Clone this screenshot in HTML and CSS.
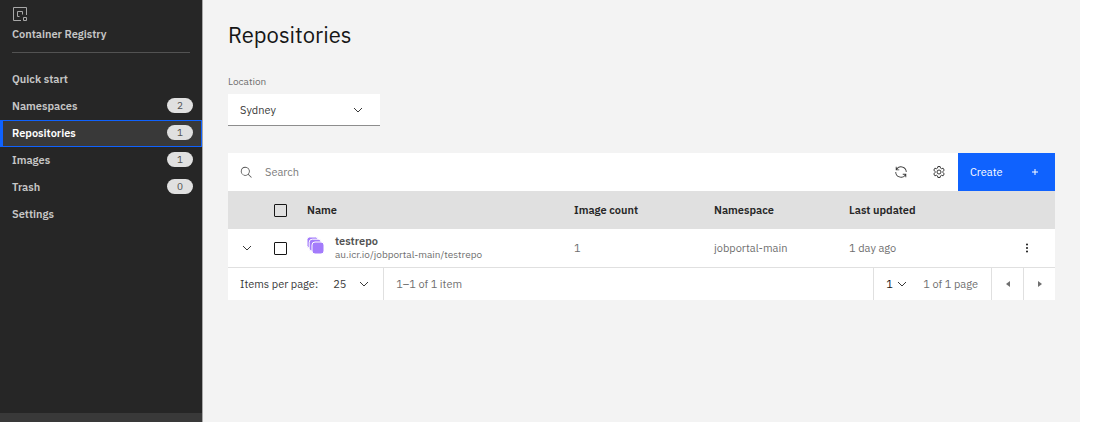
FILE: index.html
```html
<!DOCTYPE html>
<html lang="en">
<head>
<meta charset="utf-8">
<title>Container Registry - Repositories</title>
<link rel="stylesheet" href="styles.css">
</head>
<body>
<div class="shell">
  <aside class="sidebar">
    <header class="product">
      <svg class="product-icon" viewBox="0 0 16 16" aria-hidden="true"><path d="M9 14.500H1.500V1.500H14.500V9M7.500 10.500H5.500V5.500H10.500V8.500M11.500 11.500h3v3h-3z"/></svg>
      <span class="product-name">Container Registry</span>
    </header>
    <nav class="nav" aria-label="Container Registry">
      <a class="nav-link" href="#quick-start">Quick start</a>
      <a class="nav-link" href="#namespaces">Namespaces <span class="count">2</span></a>
      <a class="nav-link active" href="#repositories" aria-current="page">Repositories <span class="count">1</span></a>
      <a class="nav-link" href="#images">Images <span class="count">1</span></a>
      <a class="nav-link" href="#trash">Trash <span class="count">0</span></a>
      <a class="nav-link" href="#settings">Settings</a>
    </nav>
    <div class="sidebar-foot"></div>
  </aside>
  <main class="content">
    <h1 class="title">Repositories</h1>
    <label class="field-label" for="location">Location</label>
    <div class="select location">
      <select id="location"><option>Sydney</option></select>
      <svg class="chevron" viewBox="0 0 12 12" aria-hidden="true"><path d="M2 4l4 4 4-4"/></svg>
    </div>
    <section class="panel" aria-label="Repositories">
      <div class="toolbar">
        <label class="search-icon" for="search"><svg class="solid" viewBox="0 0 32 32" role="img" aria-label="Search"><path d="M29 27.586l-7.552-7.552a11.018 11.018 0 1 0-1.414 1.414L27.586 29zM4 13a9 9 0 1 1 9 9 9.010 9.010 0 0 1-9-9z"/></svg></label>
        <input class="search" id="search" type="search" placeholder="Search">
        <button class="tool" type="button" aria-label="Refresh"><svg class="solid" viewBox="0 0 32 32"><path d="M12 10H6.780A11 11 0 0 1 27 16h2A13 13 0 0 0 6 7.680V4H4v8h8zM20 22h5.220A11 11 0 0 1 5 16H3a13 13 0 0 0 23 8.320V28h2v-8h-8z"/></svg></button>
        <button class="tool" type="button" aria-label="Settings"><svg viewBox="0 0 14 14"><path d="M5.900 1.500h2.200l.4 1.600 1 .6 1.600-.5 1.100 1.900-1.200 1.200v1.400l1.200 1.200-1.100 1.900-1.600-.5-1 .6-.4 1.600H5.900l-.4-1.600-1-.6-1.600.5-1.100-1.900L3 7.700V6.300L1.800 5.100l1.100-1.900 1.600.5 1-.6z"/><circle cx="7" cy="7" r="2"/></svg></button>
        <button class="create" type="button">Create <svg viewBox="0 0 8 8" aria-hidden="true"><path d="M4 1v6M1 4h6"/></svg></button>
      </div>
      <table class="table">
        <colgroup><col class="c-expand"><col class="c-check"><col><col class="c-count"><col class="c-space"><col class="c-date"><col class="c-menu"></colgroup>
        <thead>
          <tr>
            <th></th>
            <th class="check-cell"><input class="check" type="checkbox" aria-label="Select all rows"></th>
            <th scope="col">Name</th>
            <th scope="col">Image count</th>
            <th scope="col">Namespace</th>
            <th scope="col">Last updated</th>
            <th></th>
          </tr>
        </thead>
        <tbody>
          <tr>
            <td><button class="expand" type="button" aria-label="Expand row"><svg class="chevron" viewBox="0 0 12 12"><path d="M2 4l4 4 4-4"/></svg></button></td>
            <td class="check-cell"><input class="check" type="checkbox" aria-label="Select testrepo"></td>
            <td>
              <div class="repo">
                <svg class="repo-icon" viewBox="0 0 17 17" aria-hidden="true"><rect width="11" height="11" rx="2.500"/><rect x="2.200" y="2.200" width="12" height="12" rx="3"/><rect x="5" y="5" width="12" height="12" rx="3"/></svg>
                <div class="repo-text">
                  <span class="repo-name">testrepo</span>
                  <span class="repo-path">au.icr.io/jobportal-main/testrepo</span>
                </div>
              </div>
            </td>
            <td>1</td>
            <td>jobportal-main</td>
            <td>1 day ago</td>
            <td><button class="menu" type="button" aria-label="Row actions"><svg class="solid" viewBox="0 0 12 12"><circle cx="6" cy="2.500" r="1"/><circle cx="6" cy="6" r="1"/><circle cx="6" cy="9.500" r="1"/></svg></button></td>
          </tr>
        </tbody>
      </table>
      <div class="pager">
        <div class="pager-size">
          <label for="size">Items per page:</label>
          <div class="select size">
            <select id="size"><option>25</option></select>
            <svg class="chevron" viewBox="0 0 12 12" aria-hidden="true"><path d="M2 4l4 4 4-4"/></svg>
          </div>
        </div>
        <span class="pager-range">1–1 of 1 item</span>
        <div class="pager-page">
          <div class="select page">
            <select id="page" aria-label="Page number"><option>1</option></select>
            <svg class="chevron" viewBox="0 0 12 12" aria-hidden="true"><path d="M2 4l4 4 4-4"/></svg>
          </div>
          <label for="page">1 of 1 page</label>
        </div>
        <button class="step" type="button" aria-label="Previous page"><svg class="solid" viewBox="0 0 8 8"><path d="M6 1v6L2 4z"/></svg></button>
        <button class="step" type="button" aria-label="Next page"><svg class="solid" viewBox="0 0 8 8"><path d="M2 1v6l4-3z"/></svg></button>
      </div>
    </section>
  </main>
</div>
</body>
</html>
```
FILE: styles.css
```css
* { box-sizing: border-box; }
body {
  margin: 0;
  background: #fff;
  color: #161616;
  font: 11px/16px "IBM Plex Sans", Inter, sans-serif;
}
button, input, select { font: inherit; color: inherit; }
button { border: 0; padding: 0; background: none; display: flex; align-items: center; justify-content: center; }
svg { display: block; fill: none; stroke: currentColor; }
.solid { fill: currentColor; stroke: none; }

.shell { display: flex; min-height: 100vh; margin-right: 15px; }
.sidebar {
  flex: 0 0 203px;
  display: flex;
  flex-direction: column;
  background: #262626;
  border-right: 1px solid #a8a8a8;
  color: #c6c6c6;
  font-weight: 600;
}
.product { margin: 0 12px; padding: 6px 0 10px; border-bottom: 1px solid #525252; }
.product-icon { width: 16px; height: 16px; margin-bottom: 4px; color: #a8a8a8; }
.product-name { display: block; }
.nav { display: flex; flex-direction: column; padding-top: 13px; }
.nav-link {
  display: flex;
  align-items: center;
  justify-content: space-between;
  height: 27px;
  padding: 0 9px 2px 12px;
  color: inherit;
  text-decoration: none;
}
.nav-link.active {
  background: #393939;
  color: #fff;
  border: 1px solid #0f62fe;
  border-left-width: 3px;
  padding: 0 8px 2px 9px;
}
.count {
  width: 26px;
  border-radius: 8px;
  background: #e0e0e0;
  color: #525252;
  font-size: 10px;
  line-height: 15px;
  font-weight: 400;
  text-align: center;
}
.sidebar-foot { height: 9px; margin-top: auto; background: #393939; }

.content { flex: 1; min-width: 0; padding: 20px 25px; background: #f3f3f3; }
.title { margin: 0 0 24px; font-size: 22px; line-height: 30px; font-weight: 400; }
.field-label { display: block; margin-bottom: 4px; color: #6f6f6f; font-size: 10px; }

.select { display: grid; align-items: center; }
.select select, .select .chevron { grid-area: 1 / 1; }
.select select { appearance: none; width: 100%; height: 100%; padding: 0; border: 0; border-radius: 0; background: transparent; }
.select .chevron { justify-self: end; pointer-events: none; }
.chevron { width: 12px; height: 12px; color: #393939; }
.location { width: 152px; height: 32px; margin-bottom: 27px; background: #fff; border-bottom: 1px solid #8d8d8d; color: #393939; }
.location select { padding-left: 12px; }
.location .chevron { margin-right: 16px; }

.panel { background: #fff; }
.toolbar { display: flex; height: 38px; }
.search-icon { display: flex; align-items: center; padding: 0 12px; color: #525252; }
.search-icon svg { width: 13px; height: 13px; }
.search { flex: 1; min-width: 0; padding: 0; border: 0; background: none; }
.search::placeholder { color: #7c7c7c; opacity: 1; }
.tool { width: 38px; color: #393939; }
.tool svg { width: 14px; height: 14px; }
.create { width: 97px; padding: 0 16px 0 12px; justify-content: space-between; background: #0f62fe; color: #fff; }
.create svg { width: 8px; height: 8px; }

.table { width: 100%; table-layout: fixed; border-spacing: 0; color: #6f6f6f; }
.c-expand { width: 38px; }
.c-check { width: 41px; }
.c-count { width: 140px; }
.c-space { width: 135px; }
.c-date { width: 149px; }
.c-menu { width: 57px; }
.table th, .table td { padding: 0; text-align: left; }
.table th { height: 38px; background: #e0e0e0; color: #262626; font-weight: 600; }
.table td { height: 39px; border-bottom: 1px solid #e0e0e0; }
.table .check-cell { padding-left: 8px; }
.check { appearance: none; display: block; width: 13px; height: 13px; margin: 0; border: 1px solid #161616; border-radius: 1px; }
.expand { width: 38px; height: 24px; }
.menu { width: 57px; height: 24px; color: #161616; }
.menu svg { width: 12px; height: 12px; }
.repo { display: flex; gap: 11px; }
.repo-icon { width: 17px; height: 17px; margin-top: 2px; fill: #a37bfb; stroke: #fff; }
.repo-text { display: flex; flex-direction: column; line-height: 13px; }
.repo-name { color: #525252; font-weight: 600; }
.repo-path { font-size: 10px; }

.pager { display: flex; height: 32px; align-items: stretch; color: #6f6f6f; }
.pager-size { display: flex; align-items: center; gap: 15px; padding: 0 13px 0 12px; border-right: 1px solid #e0e0e0; color: #393939; }
.size { width: 37px; }
.pager-range { display: flex; align-items: center; flex: 1; padding-left: 12px; }
.pager-page { display: flex; align-items: center; gap: 15px; padding: 0 13px 0 12px; border-left: 1px solid #e0e0e0; }
.page { width: 22px; color: #161616; }
.step { width: 32px; border-left: 1px solid #e0e0e0; color: #6f6f6f; }
.step svg { width: 8px; height: 8px; }
```
